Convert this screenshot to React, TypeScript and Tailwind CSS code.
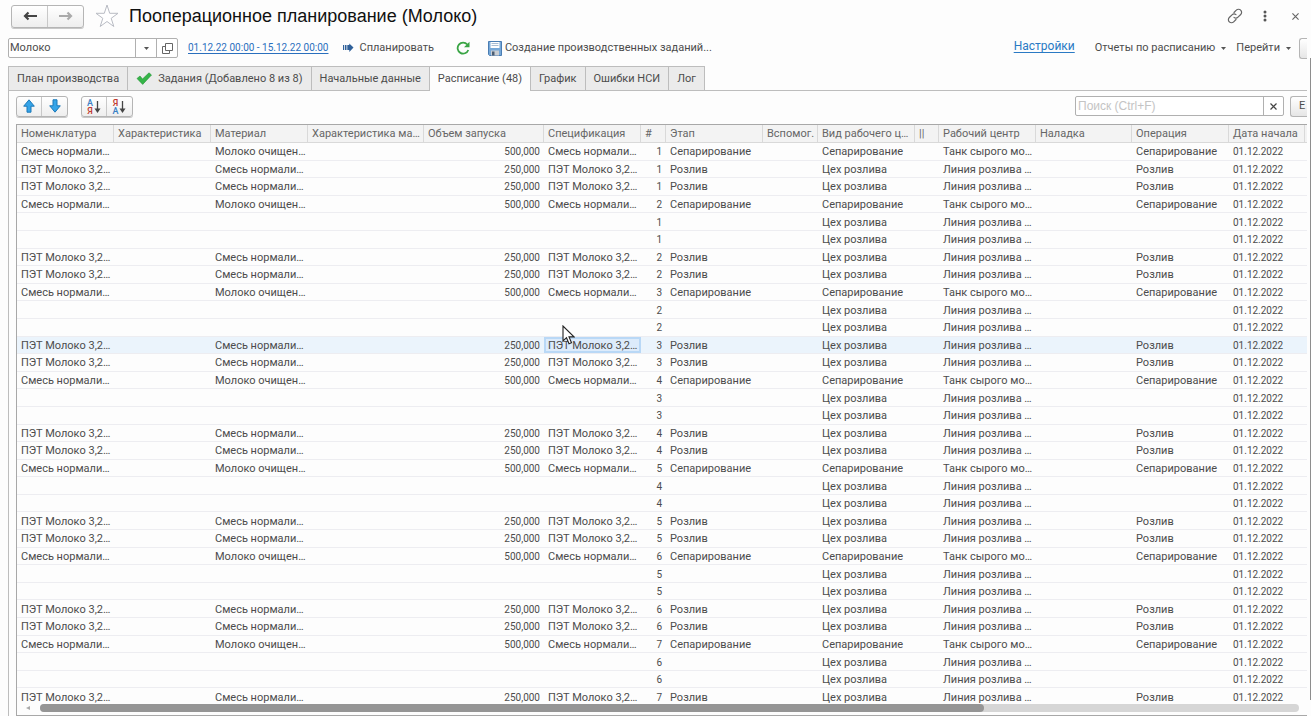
import type { ReactNode } from "react";

type Kind = "separation" | "filling" | "extra";

const columns: { title: string; width: string }[] = [
  { title: "Номенклатура", width: "w-[97px]" },
  { title: "Характеристика", width: "w-[97px]" },
  { title: "Материал", width: "w-[97px]" },
  { title: "Характеристика ма…", width: "w-[116px]" },
  { title: "Объем запуска", width: "w-[120px]" },
  { title: "Спецификация", width: "w-[97px]" },
  { title: "#", width: "w-[25px]" },
  { title: "Этап", width: "w-[97px]" },
  { title: "Вспомог.", width: "w-[55px]" },
  { title: "Вид рабочего ц…", width: "w-[97px]" },
  { title: "||", width: "w-[24px]" },
  { title: "Рабочий центр", width: "w-[97px]" },
  { title: "Наладка", width: "w-[96px]" },
  { title: "Операция", width: "w-[97px]" },
  { title: "Дата начала", width: "w-[76px]" },
  { title: "", width: "w-[97px]" },
];

const rows: { kind: Kind; n: number }[] = [{ kind: "separation", n: 1 }];
for (let n = 1; n <= 6; n++) {
  rows.push({ kind: "filling", n }, { kind: "filling", n });
  rows.push({ kind: "separation", n: n + 1 });
  rows.push({ kind: "extra", n }, { kind: "extra", n });
}
rows.push({ kind: "filling", n: 7 });

function cellsFor(kind: Kind, n: number): string[] {
  const num = String(n);
  const date = "01.12.2022";
  if (kind === "separation") {
    return ["Смесь нормали…", "", "Молоко очищен…", "", "500,000", "Смесь нормали…", num, "Сепарирование", "", "Сепарирование", "", "Танк сырого мо…", "", "Сепарирование", date, ""];
  }
  if (kind === "filling") {
    return ["ПЭТ Молоко 3,2…", "", "Смесь нормали…", "", "250,000", "ПЭТ Молоко 3,2…", num, "Розлив", "", "Цех розлива", "", "Линия розлива …", "", "Розлив", date, ""];
  }
  return ["", "", "", "", "", "", num, "", "", "Цех розлива", "", "Линия розлива …", "", "", date, ""];
}

function cellClass(column: number, selected: boolean): string {
  if (column === 4 || column === 6) {
    return "overflow-hidden border-b border-[#ededf1] p-0 pt-[2px] pr-1 text-right text-[10px] whitespace-nowrap";
  }
  if (column === 14) {
    return "overflow-hidden border-b border-[#ededf1] p-0 pt-[2px] pl-1 text-[10px] whitespace-nowrap";
  }
  if (selected && column === 5) {
    return "overflow-hidden border-b border-[#ededf1] bg-[#dcebfb] p-0 pt-[2px] pl-1 whitespace-nowrap shadow-[inset_0_0_0_2px_#b9d8f6]";
  }
  return "overflow-hidden border-b border-[#ededf1] p-0 pt-[2px] pl-1 whitespace-nowrap";
}

const Caret = () => (
  <svg className="h-[3px] w-[5px] shrink-0" viewBox="0 0 5 3" fill="#555"><path d="M0 0h5L2.5 3z" /></svg>
);

const Arrow = ({ back, color }: { back?: boolean; color: string }) => (
  <svg className="h-[10px] w-[14px]" viewBox="0 0 14 10" fill="none" stroke={color} strokeWidth="2.2">
    {back ? <path d="M14 5H2M5.500 1.500L2 5l3.500 3.500" /> : <path d="M0 5h12M8.500 1.500L12 5 8.500 8.500" />}
  </svg>
);

const BlueArrow = ({ down }: { down?: boolean }) => (
  <svg className="h-[14px] w-[12px]" viewBox="0 0 12 14" fill="#35a4e8" stroke="#1c78b8" strokeWidth="1" strokeLinejoin="round">
    {down ? <path d="M4 .8h4v6h3.3L6 13.2.7 6.800H4z" /> : <path d="M6 .8l5.300 6.400H8v6H4v-6H.7z" />}
  </svg>
);

const SortMark = ({ top, bottom, topClass, bottomClass }: { top: string; bottom: string; topClass: string; bottomClass: string }) => (
  <span className="flex items-center gap-px pt-px">
    <span className="flex flex-col text-[9px] leading-[8px] font-medium">
      <span className={topClass}>{top}</span>
      <span className={bottomClass}>{bottom}</span>
    </span>
    <svg className="h-[14px] w-[7px]" viewBox="0 0 7 14"><path d="M3.500 1v10" stroke="#444" strokeWidth="1.300" /><path d="M.5 8.500h6L3.500 13z" fill="#444" /></svg>
  </span>
);

const Tab = ({ children, active }: { children: ReactNode; active?: boolean }) => (
  <button
    type="button"
    role="tab"
    aria-selected={!!active}
    className={
      active
        ? "relative -mb-px flex h-[25px] items-center gap-[6px] border-t border-r border-[#bdbdbd] bg-[#fdfdfd] px-2 pb-px"
        : "flex h-6 items-center gap-[6px] border-t border-r border-[#bdbdbd] bg-[#ebebeb] px-2"
    }
  >
    {children}
  </button>
);

const groupClass = "flex h-[21px] overflow-hidden rounded-[3px] border border-[#b5b5b5] bg-linear-to-b from-white to-[#eeeeee] shadow-[0_1px_0_#c8c8c8]";

export default function App() {
  return (
    <main className="relative flex h-screen flex-col overflow-hidden bg-[#fdfdfd] pl-2 pr-1 font-[Roboto,'Liberation_Sans',sans-serif] text-[11px] leading-[14px] text-[#4c4c4c]">
      <header className="flex h-8 shrink-0 items-center pl-[3px]">
        <div className="flex h-[23px] w-[73px] shrink-0 overflow-hidden rounded-[3px] border border-[#b5b5b5] bg-linear-to-b from-white to-[#eeeeee] shadow-[0_1px_0_#c8c8c8]">
          <button type="button" aria-label="Назад" className="flex flex-1 items-center justify-center border-r border-[#c8c8c8]"><Arrow back color="#444" /></button>
          <button type="button" aria-label="Вперед" className="flex flex-1 items-center justify-center"><Arrow color="#aaa" /></button>
        </div>
        <button type="button" aria-label="В избранное" className="ml-[11px]">
          <svg className="h-6 w-6" viewBox="0 0 24 24" fill="#fff" stroke="#b9bcc4" strokeWidth="1"><path d="M12 1l2.700 8.300H23l-6.800 5 2.600 8.200-6.800-5-6.800 5 2.600-8.200L1 9.300h8.300z" /></svg>
        </button>
        <h1 className="ml-[10px] font-['Liberation_Sans',Arial,sans-serif] text-[18px] leading-6 text-[#111]">Пооперационное планирование (Молоко)</h1>
        <div className="ml-auto flex items-center pr-2">
          <button type="button" aria-label="Получить ссылку">
            <svg className="h-4 w-4" viewBox="0 0 16 16" fill="none" stroke="#666" strokeWidth="1.200" strokeLinecap="round">
              <path d="M7 4.500l2.300-2.300a3 3 0 0 1 4.400 0 3 3 0 0 1 0 4.300L11 9.200a3 3 0 0 1-4 .2" />
              <path d="M9 11.500l-2.300 2.300a3 3 0 0 1-4.400 0 3 3 0 0 1 0-4.300L5 6.800a3 3 0 0 1 4-.2" />
            </svg>
          </button>
          <button type="button" aria-label="Ещё" className="ml-5">
            <svg className="h-3 w-[4px]" viewBox="0 0 4 12" fill="#555"><circle cx="2" cy="2" r="1.500" /><circle cx="2" cy="6" r="1.500" /><circle cx="2" cy="10" r="1.500" /></svg>
          </button>
          <button type="button" aria-label="Закрыть" className="ml-[25px]">
            <svg className="h-[7px] w-[7px]" viewBox="0 0 8 8" stroke="#666" strokeWidth="1.300"><path d="M.5.5l7 7M7.500.5l-7 7" /></svg>
          </button>
        </div>
      </header>

      <div className="flex h-[34px] shrink-0 items-center pb-[2px]">
        <div className="flex h-5 w-[170px] shrink-0 rounded-[2px] border border-[#b0b0b0] bg-white">
          <input aria-label="Модель планирования" defaultValue="Молоко" className="min-w-0 flex-1 px-px outline-none" />
          <button type="button" aria-label="Выбрать из списка" className="flex w-[21px] items-center justify-center border-l border-[#b0b0b0]"><Caret /></button>
          <button type="button" aria-label="Открыть" className="flex w-[21px] items-center justify-center border-l border-[#b0b0b0]">
            <svg className="h-[11px] w-[11px]" viewBox="0 0 11 11" fill="#fff" stroke="#666"><path d="M.5 3.500h7v7h-7z" /><path d="M3.500.5h7v7h-7z" /></svg>
          </button>
        </div>
        <a href="#period" className="ml-[10px] text-[10px] whitespace-nowrap text-[#2a6fbd] underline underline-offset-2">01.12.22 00:00 - 15.12.22 00:00</a>
        <button type="button" className="ml-[15px] flex items-center gap-[5px] whitespace-nowrap">
          <svg className="h-[10px] w-[11px]" viewBox="0 0 11 9" fill="#2f6099"><path d="M0 1.500h1.200v5H0zM2 1.500h1.500v5H2zM4.300 1.500h2V0L10.500 4 6.300 8.500v-2h-2z" /></svg>
          Спланировать
        </button>
        <button type="button" aria-label="Обновить" className="ml-[22px]">
          <svg className="h-[14px] w-[14px]" viewBox="0 0 14 14"><path d="M12.300 9a5.500 5.500 0 1 1-1-5.500" fill="none" stroke="#3aa545" strokeWidth="1.800" /><path d="M13.500 .8v5.400H8z" fill="#3aa545" /></svg>
        </button>
        <button type="button" className="ml-[18px] flex items-center gap-[3px] whitespace-nowrap">
          <svg className="h-[15px] w-[14px]" viewBox="0 0 14 15"><path d="M.5.5h13v14H1.500l-1-1z" fill="#76a8d8" stroke="#4a7db3" /><path d="M2.500 1h9v6h-9z" fill="#fff" /><path d="M3.500 2.500h7M3.500 4.500h7" stroke="#a9bdd3" /><path d="M3 9.500h8v5H3z" fill="#c9cdd2" /><path d="M4 10.500h2.500v4H4z" fill="#4a5d73" /></svg>
          Создание производственных заданий...
        </button>
        <div className="ml-auto flex items-center whitespace-nowrap">
          <a href="#settings" className="pb-1 text-[12px] text-[#2a7ac4] underline underline-offset-2">Настройки</a>
          <button type="button" className="ml-5 flex items-center gap-[6px]">Отчеты по расписанию <Caret /></button>
          <button type="button" className="ml-[10px] flex items-center gap-[6px]">Перейти <Caret /></button>
          <button type="button" aria-label="Ещё команды" className="ml-2 h-[21px] w-2 rounded-l-[3px] border border-r-0 border-[#b5b5b5] bg-linear-to-b from-white to-[#e6e6e6]" />
        </div>
      </div>

      <div role="tablist" className="relative flex h-6 shrink-0 border-l border-[#bdbdbd] whitespace-nowrap">
        <Tab>План производства</Tab>
        <Tab>
          <svg className="h-[13px] w-4" viewBox="0 0 16 13"><path d="M1 6.500l3-2.500 2.500 3L13 .8 15.500 3 6.700 12.400z" fill="#35b548" stroke="#269238" strokeWidth=".6" /></svg>
          Задания (Добавлено 8 из 8)
        </Tab>
        <Tab>Начальные данные</Tab>
        <Tab active>Расписание (48)</Tab>
        <Tab>График</Tab>
        <Tab>Ошибки НСИ</Tab>
        <Tab>Лог</Tab>
      </div>

      <section className="flex min-h-0 flex-1 flex-col border-t border-l border-[#bdbdbd] pl-[7px]">
        <div className="flex h-[33px] shrink-0 items-center pb-[3px]">
          <div className={groupClass}>
            <button type="button" aria-label="Переместить вверх" className="flex w-[25px] items-center justify-center border-r border-[#c8c8c8]"><BlueArrow /></button>
            <button type="button" aria-label="Переместить вниз" className="flex w-[25px] items-center justify-center"><BlueArrow down /></button>
          </div>
          <div className={`${groupClass} ml-[13px]`}>
            <button type="button" aria-label="Сортировать по возрастанию" className="flex w-[25px] items-center justify-center border-r border-[#c8c8c8]"><SortMark top="А" bottom="Я" topClass="text-[#3b7fc4]" bottomClass="text-[#c0392f]" /></button>
            <button type="button" aria-label="Сортировать по убыванию" className="flex w-[25px] items-center justify-center"><SortMark top="Я" bottom="А" topClass="text-[#c0392f]" bottomClass="text-[#3b7fc4]" /></button>
          </div>
          <div className="ml-auto flex h-5 w-[209px] rounded-[2px] border border-[#b0b0b0] bg-white">
            <input aria-label="Поиск" placeholder="Поиск (Ctrl+F)" className="min-w-0 flex-1 px-[2px] font-['Liberation_Sans',Arial,sans-serif] text-[12px] outline-none placeholder:text-[#c4c4c4]" />
            <button type="button" aria-label="Очистить" className="flex w-5 items-center justify-center border-l border-[#b0b0b0]">
              <svg className="h-[7px] w-[7px]" viewBox="0 0 7 7" stroke="#444" strokeWidth="1.200"><path d="M.5.5l6 6M6.500.5l-6 6" /></svg>
            </button>
          </div>
          <button type="button" className="ml-[6px] h-[21px] w-[17px] overflow-hidden rounded-l-[3px] border border-r-0 border-[#b5b5b5] bg-linear-to-b from-white to-[#e6e6e6] pl-2 text-left">Е</button>
        </div>

        <div className="flex min-h-0 flex-1 flex-col border-t border-b border-l border-[#a8a8a8]">
          <div className="min-h-0 flex-1 overflow-hidden">
            <table className="h-[581px] w-[1385px] table-fixed border-separate border-spacing-0">
              <thead>
                <tr className="h-[18px]">
                  {columns.map((c, i) => (
                    <th key={i} className={`${c.width} overflow-hidden border-r border-b border-[#d9d9d9] bg-[#f3f3f3] p-0 pl-1 text-left font-normal whitespace-nowrap text-[#666]`}>{c.title}</th>
                  ))}
                </tr>
              </thead>
              <tbody>
                {rows.map((r, i) => {
                  const selected = i === 11;
                  return (
                    <tr key={i} className={selected ? "bg-[#ebf4fc]" : ""}>
                      {cellsFor(r.kind, r.n).map((text, j) => (
                        <td key={j} className={cellClass(j, selected)}>{text}</td>
                      ))}
                    </tr>
                  );
                })}
              </tbody>
            </table>
          </div>
          <div className="flex h-3 shrink-0 items-center pb-[3px] pr-2 pl-[9px]">
            <svg className="mr-[10px] h-1 w-[4px]" viewBox="0 0 4 4" fill="#aaa"><path d="M4 0v4L0 2z" /></svg>
            <div className="h-2 flex-1 rounded-full bg-[#d6d6d6]">
              <div className="h-2 w-3/4 rounded-full bg-[#959595]" />
            </div>
          </div>
        </div>
      </section>

      <div className="absolute top-[58px] right-0 h-[642px] w-px bg-[#8e8e8e]" />
      <svg className="absolute top-[325px] left-[562px] h-[20px] w-[13px]" viewBox="0 0 13 20" fill="#fff" stroke="#222" strokeWidth="1.100"><path d="M1 1v15l3.500-3.300 2.500 6 2.500-1-2.500-5.800h5z" /></svg>
    </main>
  );
}
